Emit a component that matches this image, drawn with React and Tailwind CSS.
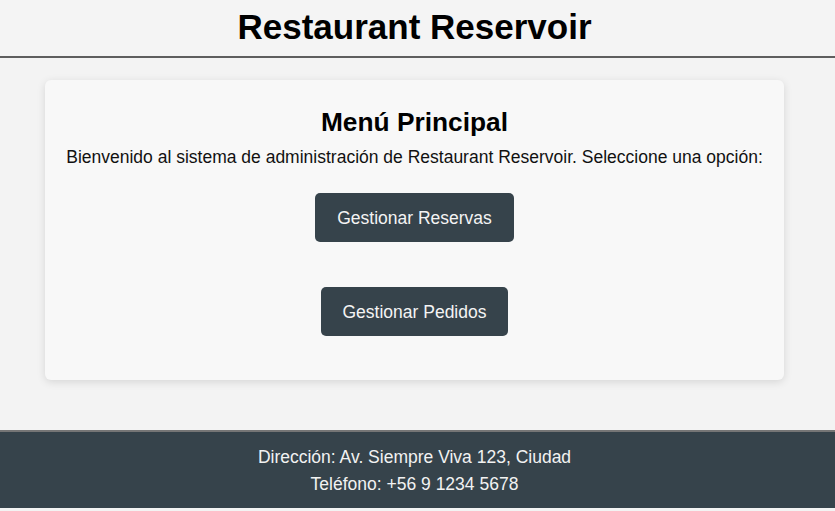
export default function App() {
  return (
    <div className="min-h-screen bg-[#f3f3f3] font-['Liberation_Sans',Arial,sans-serif] text-black">
      {/* Header */}
      <header className="h-[58px] bg-[#f4f4f4] border-b-2 border-[#5e5e5e] flex items-center justify-center pr-[6px]">
        <h1 className="text-[35px] font-bold leading-[40px] pb-[2px]">Restaurant Reservoir</h1>
      </header>

      {/* Main */}
      <main className="pt-[22px] pb-[50px] pl-[45px] pr-[51px]">
        <div className="bg-[#f8f8f8] rounded-[6px] shadow-[0_2px_8px_rgba(0,0,0,0.12)] h-[300px] flex flex-col items-center pt-[27px]">
          <h2 className="text-[26.3px] font-bold leading-[30px]">Menú Principal</h2>
          <p className="text-[17.5px] leading-[20px] mt-[10px] text-[#111]">
            Bienvenido al sistema de administración de Restaurant Reservoir. Seleccione una opción:
          </p>
          <button className="mt-[26px] h-[49px] px-[22px] rounded-[5px] bg-[#36434b] text-[#f4f4f4] text-[17.5px] leading-[20px]">
            Gestionar Reservas
          </button>
          <button className="mt-[45px] h-[49px] px-[22px] rounded-[5px] bg-[#36434b] text-[#f4f4f4] text-[17.5px] leading-[20px]">
            Gestionar Pedidos
          </button>
        </div>
      </main>

      {/* Footer */}
      <footer className="bg-[#36434b] border-t-2 border-[#767676] pt-[12px] pb-[10px] text-center text-[17.5px] leading-[27px] text-[#f2f2f2] pr-[6px]">
        <p>Dirección: Av. Siempre Viva 123, Ciudad</p>
        <p>Teléfono: +56 9 1234 5678</p>
      </footer>
    </div>
  );
}
